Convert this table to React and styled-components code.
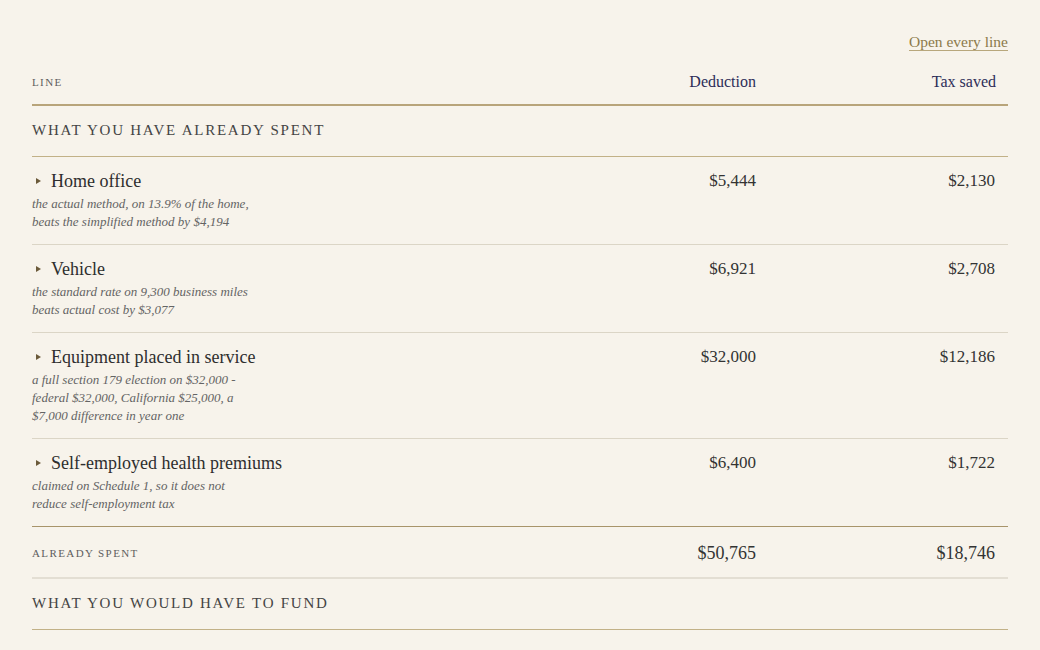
import React from 'react';
import styled, { createGlobalStyle } from 'styled-components';

const GlobalStyle = createGlobalStyle`
    html, body {
        margin: 0;
        padding: 0;
        background: #f7f3eb;
    }
    body {
        font-family: "Liberation Serif", "Times New Roman", serif;
        color: #3a3a3a;
    }
`;

const Page = styled.div`
    padding: 32px 32px 0;
`;

const TopBar = styled.div`
    display: flex;
    justify-content: flex-end;
`;

const ToggleLink = styled.a`
    font-size: 15.5px;
    line-height: 20px;
    color: #8c7a4a;
    text-decoration: underline;
    text-decoration-color: #b8a77c;
    text-underline-offset: 3px;
    cursor: pointer;
`;

const Grid = styled.div`
    display: grid;
    grid-template-columns: 1fr 240px 240px;
    align-items: start;
    border-bottom: ${p => p.$border || 'none'};
`;

const HeaderRow = styled(Grid)`
    padding: 19px 0 11px;
    border-bottom: 2px solid #b8a47a;
    line-height: 22px;
`;

const Caps = styled.div`
    font-size: 11px;
    letter-spacing: 1.4px;
    text-transform: uppercase;
    color: #5e5e5e;
    line-height: 22px;
`;

const ColHead = styled.div`
    text-align: right;
    padding-right: 12px;
    font-size: 16px;
    color: #2d2d58;
`;

const Section = styled.div`
    padding: 13px 0 15px;
    font-size: 15px;
    line-height: 22px;
    letter-spacing: 1.75px;
    text-transform: uppercase;
    color: #444;
    border-bottom: 1px solid #c2b187;
`;

const Row = styled(Grid)`
    padding: 13px 0;
`;

const LineCell = styled.div`
    display: flex;
    flex-direction: column;
`;

const Title = styled.div`
    display: flex;
    align-items: center;
    gap: 10px;
    font-size: 18px;
    line-height: 22px;
    color: #2e2e2e;
`;

const Caret = styled.span`
    width: 0;
    height: 0;
    margin-left: 4px;
    border-left: 5px solid #6b5a3a;
    border-top: 3px solid transparent;
    border-bottom: 3px solid transparent;
`;

const Note = styled.div`
    margin-top: 3px;
    font-size: 13px;
    line-height: 18px;
    font-style: italic;
    color: #646464;
    max-width: 240px;
`;

const Amount = styled.div`
    text-align: right;
    padding-right: ${p => (p.$last ? '13px' : '12px')};
    font-size: ${p => (p.$total ? '18px' : '17px')};
    line-height: 22px;
    color: #333;
`;

const TotalRow = styled(Grid)`
    padding: 15px 0 13px;
    border-top: 1px solid #a8946a;
    border-bottom: 2px solid #e3ded3;
    align-items: center;
`;

const lines = [
    {
        title: 'Home office',
        note: ['the actual method, on 13.9% of the home,', 'beats the simplified method by $4,194'],
        deduction: '$5,444',
        saved: '$2,130',
    },
    {
        title: 'Vehicle',
        note: ['the standard rate on 9,300 business miles', 'beats actual cost by $3,077'],
        deduction: '$6,921',
        saved: '$2,708',
    },
    {
        title: 'Equipment placed in service',
        note: ['a full section 179 election on $32,000 -', 'federal $32,000, California $25,000, a', '$7,000 difference in year one'],
        deduction: '$32,000',
        saved: '$12,186',
    },
    {
        title: 'Self-employed health premiums',
        note: ['claimed on Schedule 1, so it does not', 'reduce self-employment tax'],
        deduction: '$6,400',
        saved: '$1,722',
    },
];

const App = () => {
    return (
        <>
            <GlobalStyle />
            <Page>
                <TopBar>
                    <ToggleLink>Open every line</ToggleLink>
                </TopBar>
                <HeaderRow>
                    <Caps>Line</Caps>
                    <ColHead>Deduction</ColHead>
                    <ColHead>Tax saved</ColHead>
                </HeaderRow>
                <Section>What you have already spent</Section>
                {lines.map((l, i) => (
                    <Row key={l.title} $border={i < lines.length - 1 ? '1px solid #dbd5c6' : 'none'}>
                        <LineCell>
                            <Title><Caret />{l.title}</Title>
                            <Note>
                                {l.note.map(n => <div key={n}>{n}</div>)}
                            </Note>
                        </LineCell>
                        <Amount>{l.deduction}</Amount>
                        <Amount $last>{l.saved}</Amount>
                    </Row>
                ))}
                <TotalRow>
                    <Caps>Already spent</Caps>
                    <Amount $total>$50,765</Amount>
                    <Amount $total $last>$18,746</Amount>
                </TotalRow>
                <Section>What you would have to fund</Section>
            </Page>
        </>
    );
};

export default App;
